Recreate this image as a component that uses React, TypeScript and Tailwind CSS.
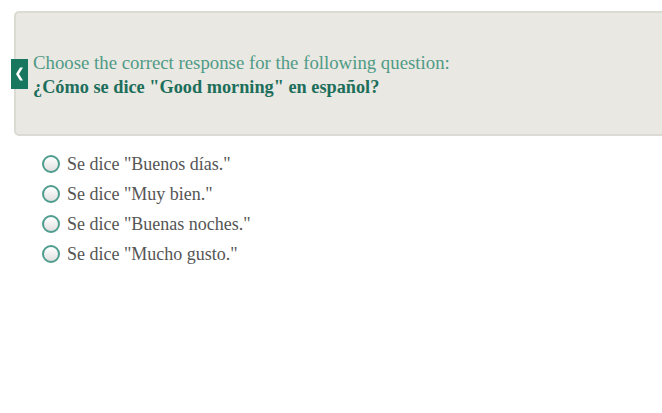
const options = [
  'Se dice "Buenos días."',
  'Se dice "Muy bien."',
  'Se dice "Buenas noches."',
  'Se dice "Mucho gusto."',
];

export default function App() {
  return (
    <div className="w-[662px] h-[413px] bg-white overflow-hidden font-['Liberation_Serif',serif]">
      <div className="pt-[11px] pl-[14px]">
        <div className="relative h-[125px] w-[700px] rounded-l-[5px] border-2 border-[#dbdad3] bg-[#e9e8e2] flex flex-col justify-center pl-[17px]">
          <div className="absolute left-[-5px] top-[46px] w-[17px] h-[30px] bg-[#17785f] flex items-center justify-center">
            <svg width="9" height="14" viewBox="0 0 9 14">
              <path d="M5 0.5 L8 0.5 L4 7 L8 13.5 L5 13.5 L1 7 Z" fill="white" />
            </svg>
          </div>
          <p className="text-[18.8px] leading-[24px] text-[#4f9a86] mt-[3px]">
            Choose the correct response for the following question:
          </p>
          <p className="text-[18.3px] leading-[24px] font-bold text-[#1d6e5b]">
            ¿Cómo se dice "Good morning" en español?
          </p>
        </div>
      </div>
      <ul className="pl-[42px] pt-[13px] flex flex-col">
        {options.map((o) => (
          <li key={o} className="flex items-center h-[30px]">
            <span className="w-[18px] h-[18px] rounded-full border-2 border-[#4f9d8e] bg-gradient-to-b from-white to-[#e0e0e0] shrink-0" />
            <span className="ml-[7px] text-[18px] text-[#555555]">{o}</span>
          </li>
        ))}
      </ul>
    </div>
  );
}
